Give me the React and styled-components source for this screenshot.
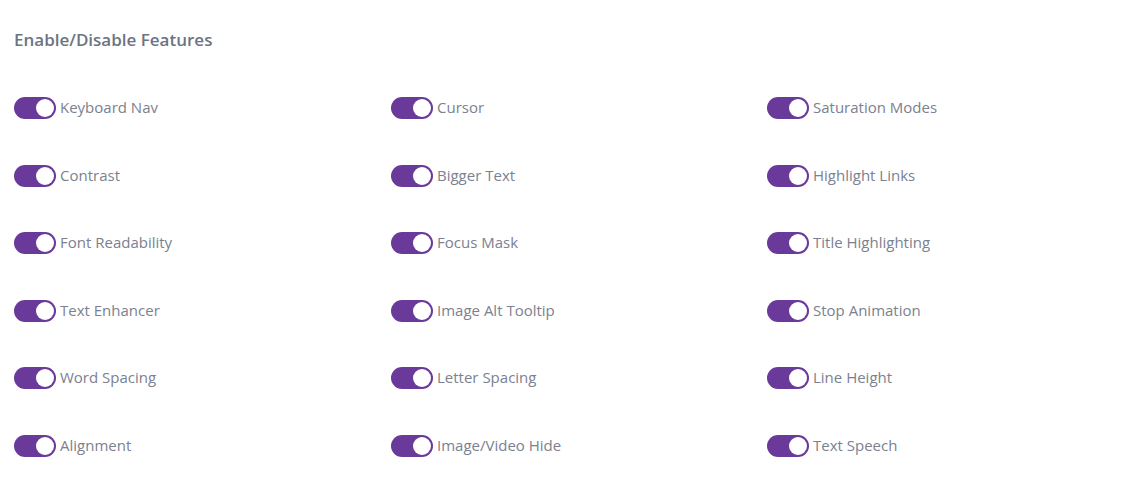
import React from "react"
import styled, { createGlobalStyle } from "styled-components"

const features = [
  "Keyboard Nav", "Cursor", "Saturation Modes",
  "Contrast", "Bigger Text", "Highlight Links",
  "Font Readability", "Focus Mask", "Title Highlighting",
  "Text Enhancer", "Image Alt Tooltip", "Stop Animation",
  "Word Spacing", "Letter Spacing", "Line Height",
  "Alignment", "Image/Video Hide", "Text Speech",
]

const GlobalStyle = createGlobalStyle`
  body {
    margin: 0;
    background: #ffffff;
    font-family: "Open Sans", "Noto Sans", sans-serif;
  }
`

const App = () => (
  <>
    <GlobalStyle />
    <Panel>
      <Heading>Enable/Disable Features</Heading>
      <Grid>
        {features.map((name) => (
          <Feature key={name}>
            <Toggle>
              <Knob />
            </Toggle>
            <Label>{name}</Label>
          </Feature>
        ))}
      </Grid>
    </Panel>
  </>
)

const Panel = styled.section`
  padding: 29px 14px 0;
`

const Heading = styled.h2`
  margin: 0;
  font-size: 17px;
  font-weight: 600;
  line-height: 22px;
  color: #6c7381;
`

const Grid = styled.div`
  display: grid;
  grid-template-columns: 377px 376px 1fr;
  grid-auto-rows: 67.6px;
  margin-top: 45px;
`

const Feature = styled.div`
  display: flex;
  align-items: center;
  gap: 4px;
  height: 24px;
`

const Toggle = styled.span`
  display: flex;
  align-items: center;
  justify-content: flex-end;
  box-sizing: border-box;
  width: 42px;
  height: 22px;
  padding: 2px;
  border-radius: 11px;
  background: #6a3a9a;
  flex-shrink: 0;
`

const Knob = styled.span`
  width: 18px;
  height: 18px;
  border-radius: 50%;
  background: #ffffff;
`

const Label = styled.span`
  font-size: 15px;
  line-height: 20px;
  color: #7b8190;
  margin-top: -2px;
`

export default App
